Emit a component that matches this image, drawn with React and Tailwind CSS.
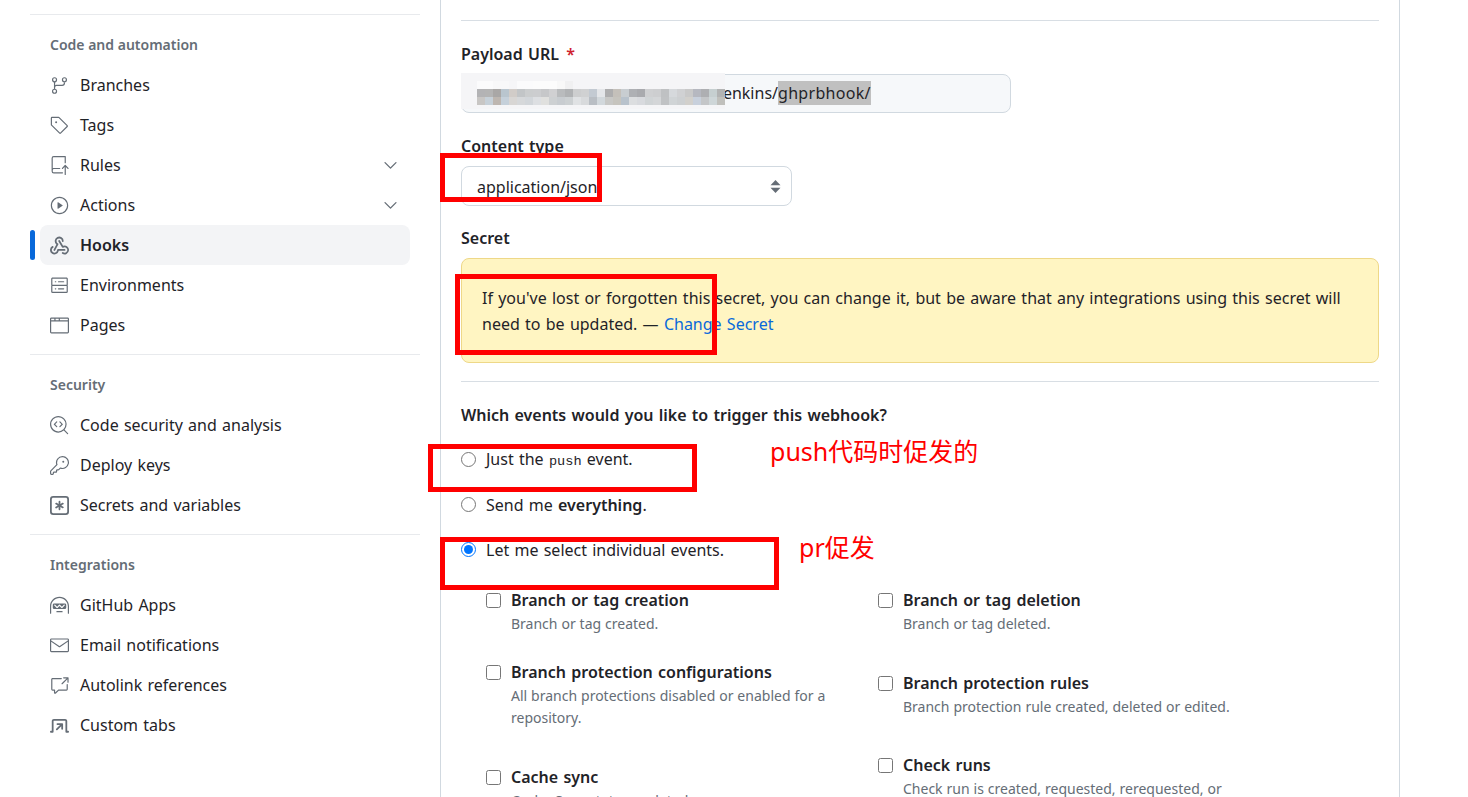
import {
  GoGitBranch, GoTag, GoRepoPush, GoPlay, GoServer, GoBrowser,
  GoCodescan, GoKey, GoHubot, GoMail, GoCrossReference, GoChevronDown,
} from "react-icons/go";

function GoWebhook({ className }) {
  return (
    <svg className={className} viewBox="0 0 16 16" fill="currentColor">
      <path d="M5.5 4.25a2.25 2.25 0 0 1 4.5 0 .75.75 0 0 0 1.5 0 3.75 3.75 0 1 0-6.14 2.889l-2.272 4.258a.75.75 0 0 0 1.324.706L7 7.25a.75.75 0 0 0-.309-1.015A2.25 2.25 0 0 1 5.5 4.25Z" />
      <path d="M7.364 3.607a.75.75 0 0 1 1.03.257l2.608 4.349a3.75 3.75 0 1 1-.628 6.785.75.75 0 0 1 .752-1.299 2.25 2.25 0 1 0-.033-3.88.75.75 0 0 1-1.03-.256L7.107 4.636a.75.75 0 0 1 .257-1.03Z" />
      <path d="M2.9 8.776A.75.75 0 0 1 2.625 9.8 2.25 2.25 0 1 0 6 11.75a.75.75 0 0 1 .75-.751h5.5a.75.75 0 0 1 0 1.5H7.425a3.751 3.751 0 1 1-5.55-3.998.75.75 0 0 1 1.024.274Z" />
    </svg>
  );
}

function GoKeyAsterisk({ className }) {
  return (
    <svg className={className} viewBox="0 0 16 16" fill="currentColor">
      <path d="M0 2.75A2.75 2.75 0 0 1 2.75 0h10.5A2.75 2.75 0 0 1 16 2.75v10.5A2.75 2.75 0 0 1 13.25 16H2.75A2.75 2.75 0 0 1 0 13.25ZM2.75 1.5c-.69 0-1.25.56-1.25 1.25v10.5c0 .69.56 1.25 1.25 1.25h10.5c.69 0 1.25-.56 1.25-1.25V2.75c0-.69-.56-1.25-1.25-1.25Z" />
      <path d="M8 4a.75.75 0 0 1 .75.75V6.7l1.69-.975a.75.75 0 0 1 .75 1.3L9.5 8l1.69.976a.75.75 0 0 1-.75 1.298L8.75 9.299V11.25a.75.75 0 0 1-1.5 0V9.3l-1.69.974a.75.75 0 1 1-.75-1.298L6.5 8l-1.69-.975a.75.75 0 0 1 .75-1.3l1.69.976V4.75A.75.75 0 0 1 8 4Z" />
    </svg>
  );
}

function GoTabExternal({ className }) {
  return (
    <svg className={className} viewBox="0 0 16 16" fill="currentColor">
      <path d="M3.25 4a.25.25 0 0 0-.25.25v9a.75.75 0 0 1-.75.75H.75a.75.75 0 0 1 0-1.5h.75V4.25c0-.966.784-1.75 1.75-1.75h9.5c.966 0 1.75.784 1.75 1.75v8.25h.75a.75.75 0 0 1 0 1.5h-1.5a.75.75 0 0 1-.75-.75v-9a.25.25 0 0 0-.25-.25Z" />
      <path d="M6.25 6a.75.75 0 0 0 0 1.5h2.19L5.22 10.72a.75.75 0 1 0 1.06 1.06L9.5 8.56v2.19a.75.75 0 0 0 1.5 0v-4a.75.75 0 0 0-.75-.75Z" />
    </svg>
  );
}

const sections = [
  {
    title: "Code and automation",
    items: [
      { label: "Branches", icon: GoGitBranch },
      { label: "Tags", icon: GoTag },
      { label: "Rules", icon: GoRepoPush, chevron: true },
      { label: "Actions", icon: GoPlay, chevron: true },
      { label: "Hooks", icon: GoWebhook, active: true },
      { label: "Environments", icon: GoServer },
      { label: "Pages", icon: GoBrowser },
    ],
  },
  {
    title: "Security",
    items: [
      { label: "Code security and analysis", icon: GoCodescan },
      { label: "Deploy keys", icon: GoKey },
      { label: "Secrets and variables", icon: GoKeyAsterisk },
    ],
  },
  {
    title: "Integrations",
    items: [
      { label: "GitHub Apps", icon: GoHubot },
      { label: "Email notifications", icon: GoMail },
      { label: "Autolink references", icon: GoCrossReference },
      { label: "Custom tabs", icon: GoTabExternal },
    ],
  },
];

// mosaic over the payload url
const mosaicTop = ["#fbfbfc", "#fbfbfc", "#f8f8f9", "#f8f8f9", "#f6f6f8", "#fbfbfc", "#fbfbfc", "#fcfcfc", "#fcfcfc", "#fcfcfc", "#f8f8f8", "#f0f0f1"];
const mosaicA = ["#b3b3b5", "#b4b4b4", "#a9a7a6", "#b9c5ce", "#d1ccc8", "#c2c5c7", "#cbcdce", "#cccdcf", "#c6c7c9", "#d0d0d2", "#b9bbbd", "#b0b2b4", "#cdcecf", "#d0d1d2", "#c3cad2", "#e4e6e9", "#aeaeaf", "#c4c0ba", "#c8cdd1", "#aeb0b4", "#a9aaae", "#cfd0d2", "#cdced0", "#bfc1c3", "#d6d9dc", "#d0d1d3", "#c9c9c9", "#b6b8c0", "#aeafb2", "#c6cfd0", "#b2b3b3"];
const mosaicB = ["#c8c6c4", "#c6d0d8", "#bdb6b0", "#c5d0da", "#d8d6d4", "#d6d8da", "#d2d6da", "#dddfe2", "#e0e0de", "#cdd0d2", "#c8ccd0", "#ccd0d2", "#e0e2e4", "#d8dadc", "#b9bec4", "#d2d8dc", "#c8c8c6", "#c6c4be", "#b8c2cc", "#dcdee0", "#d8dade", "#d0d4d6", "#d4d6d8", "#c0c2c4", "#d0d4d6", "#cdd0d2", "#d2d0cc", "#c8d0dc", "#c4c6c8", "#ced6d8", "#c0c0bc"];

function RedBox({ className }) {
  return <div className={`absolute border-[5px] border-[#ff0000] ${className}`} />;
}

function NavRow({ item }) {
  const Icon = item.icon;
  return (
    <div className={`relative ml-[10px] w-[370px] h-10 flex items-center pl-[10px] pr-[9px] rounded-lg ${item.active ? "bg-[#f3f4f6] font-semibold" : ""}`}>
      {item.active && <span className="absolute left-[-10px] top-[5px] w-[5px] h-[30px] rounded-[3px] bg-[#0969da]" />}
      <Icon className="w-[19px] h-[19px] text-[#656d76] shrink-0" />
      <span className="ml-[11px] flex-1 text-[#1f2328]">{item.label}</span>
      {item.chevron && <GoChevronDown className="w-[21px] h-[21px] text-[#656d76]" />}
    </div>
  );
}

function Sidebar() {
  return (
    <aside className="w-[390px] ml-[30px] pt-[14px] shrink-0">
      {sections.map((section) => (
        <div key={section.title} className="border-t border-[#e8eaed] mb-[9px]">
          <div className="mt-5 mb-[10px] pl-5 h-5 text-[14px] leading-5 font-semibold text-[#656d76] [word-spacing:0]">{section.title}</div>
          {section.items.map((item) => (
            <NavRow key={item.label} item={item} />
          ))}
        </div>
      ))}
    </aside>
  );
}

function RadioRow({ checked, children, className }) {
  return (
    <label className={`flex items-center h-6 ${className}`}>
      <input type="radio" name="events" defaultChecked={checked} className="w-[15px] h-[15px] m-0 mb-[1px] shrink-0" />
      <span className="ml-[10px]">{children}</span>
    </label>
  );
}

function EventCheck({ title, desc, className }) {
  return (
    <div className={`flex ${className}`}>
      <input type="checkbox" className="w-[15px] h-[15px] m-0 mt-[5px] shrink-0" />
      <div className="ml-[10px]">
        <div className="h-6 leading-6 font-semibold">{title}</div>
        {desc && <p className="mt-[1px] text-[14px] leading-[22px] text-[#656d76] w-[345px] [word-spacing:0.3px]">{desc}</p>}
      </div>
    </div>
  );
}

function PayloadInput() {
  return (
    <div className="relative mt-2 w-[550px] h-[39px] flex items-center pl-4 rounded-lg border border-[#d1d9e0] bg-[#f6f8fa]">
      <span className="w-[300px] text-right mb-[1px]">jenkins/</span>
      <span className="h-6 leading-6 mb-[1px] bg-[#c0c0c0] tracking-[0.3px]">ghprbhook/</span>
      <svg className="absolute left-[-1px] top-[-2px]" width="264" height="36" viewBox="0 0 264 36">
        <rect width="264" height="36" fill="#f5f5f7" />
        {mosaicTop.map((c, i) => <rect key={i} x={16 + i * 8} y="8" width="8" height="8" fill={c} />)}
        {mosaicA.map((c, i) => <rect key={i} x={16 + i * 8} y="16" width="8" height="8" fill={c} />)}
        {mosaicB.map((c, i) => <rect key={i} x={16 + i * 8} y="24" width="8" height="8" fill={c} />)}
      </svg>
    </div>
  );
}

function FormPanel() {
  return (
    <main className="ml-5 w-[960px] h-[797px] border-x border-[#d1d9e0] px-5 pt-5 text-[#1f2328] shrink-0 overflow-hidden">
      <div className="border-t border-[#d8dee4]" />
      <div className="mt-[21px] h-6 leading-6 font-semibold">
        Payload URL <span className="ml-[2px] text-[#cf222e]">*</span>
      </div>
      <PayloadInput />

      <div className="mt-[21px] h-6 leading-6 font-semibold">Content type</div>
      <div className="mt-2 w-[331px] h-10 flex items-center justify-between pl-[15px] pr-[10px] pt-[1px] rounded-lg border border-[#d1d9e0] bg-white">
        <span>application/json</span>
        <svg width="11" height="13" viewBox="0 0 11 13" fill="#656d76">
          <path d="M5.5 0 10.5 5.2H.5z" />
          <path d="M5.5 13 .5 7.8h10z" />
        </svg>
      </div>

      <div className="mt-5 h-6 leading-6 font-semibold">Secret</div>
      <div className="mt-2 h-[105px] pl-5 pt-[26px] rounded-lg border border-[#eed888] bg-[#fff5c2] leading-[26px]">
        If you've lost or forgotten this secret, you can change it, but be aware that any integrations using this secret will
        <br />
        need to be updated. — <a className="text-[#0969da]">Change Secret</a>
      </div>

      <div className="mt-[18px] border-t border-[#d8dee4]" />
      <div className="mt-[21px] h-6 leading-6 font-semibold">Which events would you like to trigger this webhook?</div>

      <RadioRow className="mt-[21px]">
        Just the <code className="font-['Liberation_Mono',monospace] text-[13.6px]">push</code> event.
      </RadioRow>
      <RadioRow className="mt-[21px]">
        Send me <strong className="font-semibold">everything</strong>.
      </RadioRow>
      <RadioRow checked className="mt-[21px]">Let me select individual events.</RadioRow>

      <div className="mt-[26px] pl-[25px] flex">
        <div className="w-[392px]">
          <EventCheck title="Branch or tag creation" desc="Branch or tag created." className="mb-[25px]" />
          <EventCheck title="Branch protection configurations" desc="All branch protections disabled or enabled for a repository." className="mb-9" />
          <EventCheck title="Cache sync" desc="Cache Sync status updated." />
        </div>
        <div>
          <EventCheck title="Branch or tag deletion" desc="Branch or tag deleted." className="mb-9" />
          <EventCheck title="Branch protection rules" desc="Branch protection rule created, deleted or edited." className="mb-[35px]" />
          <EventCheck title="Check runs" desc="Check run is created, requested, rerequested, or completed." />
        </div>
      </div>
    </main>
  );
}

export default function App() {
  return (
    <div className="relative w-full h-[797px] overflow-hidden flex bg-white text-[16px] [word-spacing:1.1px] text-[#1f2328] font-['Noto_Sans','Noto_Sans_CJK_SC',sans-serif]">
      <Sidebar />
      <FormPanel />

      {/* annotations drawn on top of the screenshot */}
      <RedBox className="left-[440px] top-[153px] w-[162px] h-[49px]" />
      <RedBox className="left-[455px] top-[274px] w-[262px] h-[81px]" />
      <RedBox className="left-[428px] top-[444px] w-[269px] h-[48px]" />
      <RedBox className="left-[440px] top-[537px] w-[339px] h-[53px]" />
      <span className="absolute left-[770px] top-[433px] text-[25px] leading-9 text-[#ff0000]">push代码时促发的</span>
      <span className="absolute left-[799px] top-[529px] text-[25px] leading-9 text-[#ff0000]">pr促发</span>
    </div>
  );
}
